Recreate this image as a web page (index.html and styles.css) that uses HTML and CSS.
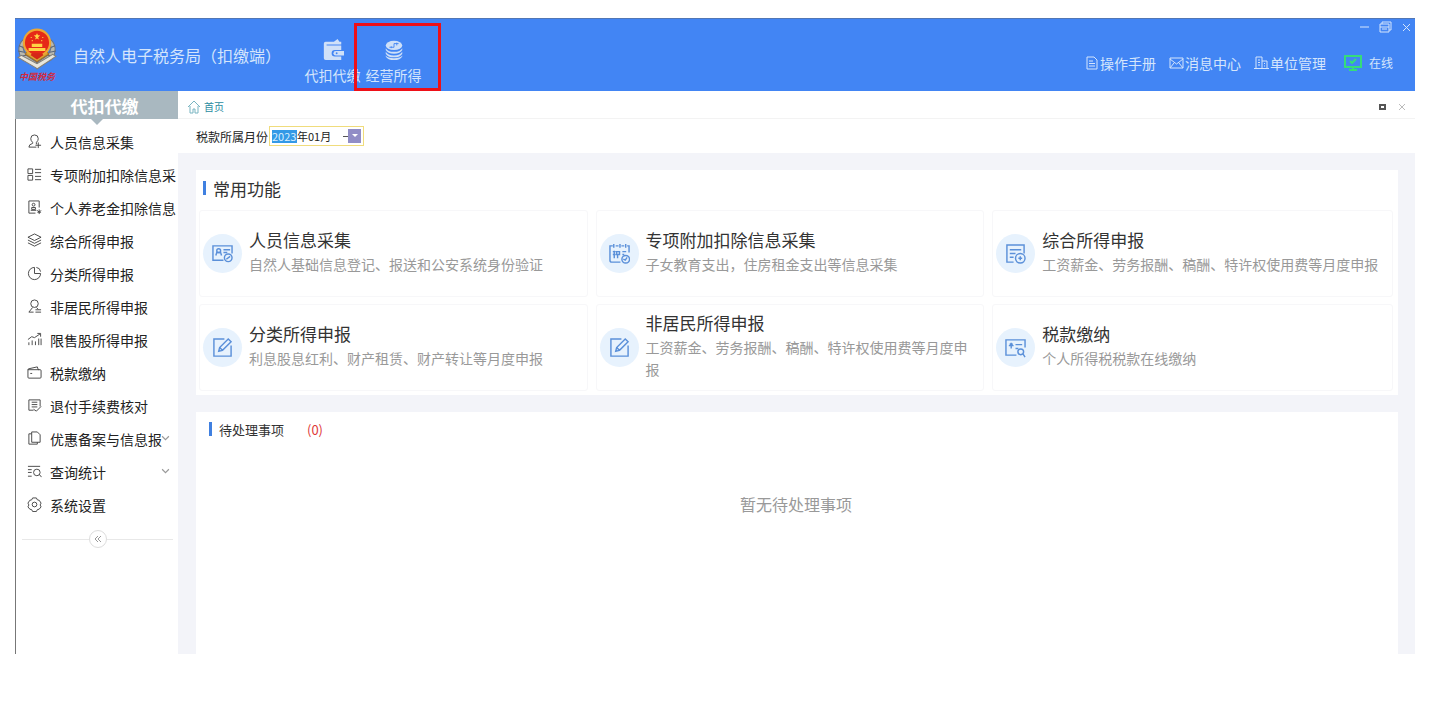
FILE: index.html
```html
<!DOCTYPE html>
<html lang="zh-CN">
<head>
    <meta charset="UTF-8">
    <meta name="viewport" content="width=device-width, initial-scale=1.0">
    <title>自然人电子税务局（扣缴端）</title>
    <link rel="stylesheet" href="styles.css">
</head>
<body>
    <div class="app">
        <header class="header">
            <div class="brand">
                <div class="emblem">
                    <svg width="40" height="42" viewBox="1 0 38 40">
                        <path d="M7 11C2 15 1 23 6 30L17 36L20 33L10 26C6 21 6 16 9 12Z" fill="#b9b9ae" stroke="#6c7480"/>
                        <path d="M33 11C38 15 39 23 34 30L23 36L20 33L30 26C34 21 34 16 31 12Z" fill="#b9b9ae" stroke="#6c7480"/>
                        <path d="M3 17l5 2M2 22l6 1M4 27l6-1M37 17l-5 2M38 22l-6 1M36 27l-6-1" stroke="#596579"/>
                        <path d="M2 28L19 38L20 39L38 27L35 25L20 34L5 26Z" fill="#e8e6dc" stroke="#827f78"/>
                        <path d="M9 25L20 32L31 25L29 21H11Z" fill="#d9a634" stroke="#a86c20"/>
                        <circle cx="20" cy="14" r="12.500" fill="#e62918" stroke="#eea634" stroke-width="2"/>
                        <path d="M20 5l1 2h2l-2 2 1 2-2-1-2 1 1-2-2-2h2zM12 19h16v3H12zM15 15h10v3H15z" fill="#ffd344"/>
                        <path d="M14 9h1M25 9h1M15 12h1M24 12h1" stroke="#ffd344"/>
                        <path d="M14 26l6 4 6-4-1-2H15z" fill="#d52817"/>
                    </svg>
                    <span class="emblem-text">中国税务</span>
                </div>
                <span class="brand-name">自然人电子税务局（扣缴端）</span>
            </div>
            <nav class="modules">
                <button class="module">
                    <svg width="24" height="24" viewBox="0 0 24 24">
                        <path d="M2 5q0-2 2-2h9l4-3 2 3h2v3H5v1h16v5h-7a3.500 3.500 0 0 0 0 7h7v4H4q-2 0-2-2z" fill="#cfe0f8"/>
                        <path d="M15 13h9v5h-9a2.500 2.500 0 0 1 0-5z" fill="#cfe0f8"/>
                        <circle cx="16" cy="15.500" r="1" fill="#4285f4"/>
                    </svg>
                    <span>代扣代缴</span>
                </button>
                <button class="module marked">
                    <svg width="24" height="24" viewBox="0 0 24 24" fill="#cfe0f8">
                        <ellipse cx="12" cy="7" rx="9" ry="5"/>
                        <path d="M3 10q2 4 9 4t9-4v2q-2 4-9 4t-9-4zM3 14q2 4 9 4t9-4v2q-2 4-9 4t-9-4zM3 18q2 3 9 3t9-3v1q-2 4-9 4t-9-4z"/>
                        <path d="M7 9h5V5h5M9 10V8M15 4v3" fill="none" stroke="#4285f4"/>
                    </svg>
                    <span>经营所得</span>
                </button>
            </nav>
            <div class="header-right">
                <div class="window-buttons">
                    <button aria-label="最小化"><svg width="12" height="14" viewBox="0 0 12 14"><path d="M1 7h9"/></svg></button>
                    <button aria-label="还原"><svg width="14" height="14" viewBox="0 0 14 14"><path d="M1 4h9v8H1zM3 4V2h9v8h-2M1 7h9M3 9h5"/></svg></button>
                    <button aria-label="关闭"><svg width="12" height="14" viewBox="0 0 12 14"><path d="M2 4l7 7M9 4l-7 7"/></svg></button>
                </div>
                <div class="tools">
                    <a href="#"><svg width="14" height="14" viewBox="0 0 14 14"><path d="M2 1h7l3 3v9H2zM4 5h4M4 7.500h6M4 10h6"/></svg>操作手册</a>
                    <a href="#"><svg width="15" height="14" viewBox="0 0 15 14"><path d="M1 2h13v10H1zM1 3l6.500 5L14 3M1 12l4-5M14 12l-4-5"/></svg>消息中心</a>
                    <a href="#"><svg width="15" height="14" viewBox="0 0 15 14"><path d="M2 12V1h6v11M8 5h5v7M0 12.500h15M4 4h2M4 6.500h2M4 9h2M10 7.500h1M10 10h1"/></svg>单位管理</a>
                    <span class="online">
                        <svg width="18" height="16" viewBox="0 0 18 16"><path d="M1 1h16v11H1zM9 12v3M5 15h8M6 6l2 2 4-4"/></svg>在线
                    </span>
                </div>
            </div>
        </header>

        <div class="body">
            <aside class="sidebar">
                <h2 class="sidebar-title">代扣代缴</h2>
                <ul class="menu">
                    <li><a href="#"><svg viewBox="0 0 16 16"><path d="M6 9Q4 7 4 5a4 4 0 0 1 8 0q0 2-2 4v2M6 9v1q-4 1-4 4h8M9 12h6M12 9v6"/></svg><span>人员信息采集</span></a></li>
                    <li><a href="#"><svg viewBox="0 0 16 16"><path d="M1 2h5v5H1zM1 9h5v5H1zM8.500 2.500H15M8.500 6H15M8.500 10H15M8.500 13.500H15"/></svg><span>专项附加扣除信息采</span></a></li>
                    <li><a href="#"><svg viewBox="0 0 16 16"><path d="M9 14H2V1h11v7M5 10V8h4v2zM4 11h6M11 11l2 2 2-2M11 13h4M13 10v5"/><circle cx="7" cy="5" r="1.500"/></svg><span>个人养老金扣除信息</span></a></li>
                    <li><a href="#"><svg viewBox="0 0 16 16"><path d="M8 1l7 3.500L8 8 1 4.500zM1 7.500L8 11l7-3.500M1 10.500L8 14l7-3.500"/></svg><span>综合所得申报</span></a></li>
                    <li><a href="#"><svg viewBox="0 0 16 16"><path d="M8 1.500A6.500 6.500 0 1 0 14.500 8H8zM10 1.500Q14 2 14.500 6"/></svg><span>分类所得申报</span></a></li>
                    <li><a href="#"><svg viewBox="0 0 16 16"><circle cx="8" cy="5" r="4"/><path d="M6 9L2 14h5M10 9l2 2M9 11.500h6M9 14h6"/></svg><span>非居民所得申报</span></a></li>
                    <li><a href="#"><svg viewBox="0 0 16 16"><path d="M1 8l4-3 3 1 6-4M11 1.500h3.500V5M2 14v-3M5.500 14V9M9 14v-4M12.500 14V7M15 14V7"/></svg><span>限售股所得申报</span></a></li>
                    <li><a href="#"><svg viewBox="0 0 16 16"><path d="M1 5q0-1 1-1l9-2 1 3h2q1 0 1 1v7q0 1-1 1H2q-1 0-1-1zM1 5h12M3.500 9h2"/></svg><span>税款缴纳</span></a></li>
                    <li><a href="#"><svg viewBox="0 0 16 16"><path d="M7 13H2V2h12v7M5 4.500h6M5 7h6M5 9.500h6M7 12l3 2 5-5"/></svg><span>退付手续费核对</span></a></li>
                    <li><a href="#"><svg viewBox="0 0 16 16"><path d="M5 1h6l3 3v8H5zM5 3H2v11h9v-2"/></svg><span>优惠备案与信息报</span><svg class="chevron" viewBox="0 0 8 8"><path d="M1 2l3 3 3-3"/></svg></a></li>
                    <li><a href="#"><svg viewBox="0 0 16 16"><path d="M1 2.500h13M1 6h4M1 9h4M1 13h4M13 11l2.500 3"/><circle cx="10.500" cy="9" r="3.500"/></svg><span>查询统计</span><svg class="chevron" viewBox="0 0 8 8"><path d="M1 2l3 3 3-3"/></svg></a></li>
                    <li><a href="#"><svg viewBox="0 0 16 16"><path d="M6 1h4l1 2 2 .5 2 3-1 2 1 2-2 2.500-2 .5-1 2H6l-1-2-2-.5-2-2.500 1-2-1-2 2-3L5 3z"/><circle cx="8" cy="8" r="2.500"/></svg><span>系统设置</span></a></li>
                </ul>
                <div class="collapse">
                    <button aria-label="收起菜单"><svg width="8" height="8" viewBox="0 0 8 8"><path d="M4 1L1 4l3 3M7 1L4 4l3 3"/></svg></button>
                </div>
            </aside>

            <main class="main">
                <div class="tabs">
                    <a class="home" href="#"><svg width="14" height="14" viewBox="0 0 14 14"><path d="M1 7l6-6 6 6M3 6v7h3V9h2v4h3V6"/></svg>首页</a>
                    <div class="tab-buttons">
                        <button aria-label="最大化"><span class="square"></span></button>
                        <button aria-label="关闭标签"><svg width="8" height="8" viewBox="0 0 8 8"><path d="M1 1l6 6M7 1L1 7"/></svg></button>
                    </div>
                </div>
                <div class="filter">
                    <label for="year">税款所属月份</label>
                    <div class="date-box">
                        <input class="year" id="year" type="text" value="2023">
                        <input class="month" type="text" value="年01月" aria-label="月份">
                        <span class="dash"></span>
                        <button aria-label="选择月份"><svg width="6" height="4" viewBox="0 0 6 4"><path d="M0 0h6L3 3z"/></svg></button>
                    </div>
                </div>

                <div class="content">
                    <section class="panel">
                        <h3 class="panel-title">常用功能</h3>
                        <div class="cards">
                            <a class="card" href="#">
                                <span class="card-icon"><svg viewBox="0 0 22 22"><path d="M12 18H1V3h20v8M4 13l1-3h4l1 3M12 7h7M12 10h4M15 17l4-3"/><circle cx="7" cy="8" r="2"/><circle cx="17" cy="15.500" r="4"/></svg></span>
                                <span class="card-text"><strong>人员信息采集</strong><span>自然人基础信息登记、报送和公安系统身份验证</span></span>
                            </a>
                            <a class="card" href="#">
                                <span class="card-icon"><svg viewBox="0 0 22 22"><path d="M12 20H3q-2 0-2-2V3h3M7 3h3M13 3h3M19 3h2v7M5 1v4M11.500 1v4M17.500 1v4M4 9h3M4 12h3M5.500 8v8M8 9h3v3H8zM9 12v4M14 9h4M14 12h2M15 17l2 1 2-3"/><circle cx="17.500" cy="17" r="4"/></svg></span>
                                <span class="card-text"><strong>专项附加扣除信息采集</strong><span>子女教育支出，住房租金支出等信息采集</span></span>
                            </a>
                            <a class="card" href="#">
                                <span class="card-icon"><svg viewBox="0 0 22 22"><path d="M9 20H2V2h18v9M5 7h12M5 11h6M5 15h4M14 16h4M16 14v4"/><circle cx="16" cy="16" r="5"/></svg></span>
                                <span class="card-text"><strong>综合所得申报</strong><span>工资薪金、劳务报酬、稿酬、特许权使用费等月度申报</span></span>
                            </a>
                            <a class="card" href="#">
                                <span class="card-icon"><svg viewBox="0 0 22 22"><path d="M13 2H2v18h18V9M7 15l1-4 9-9 3 3-9 9zM8 11l3 3"/></svg></span>
                                <span class="card-text"><strong>分类所得申报</strong><span>利息股息红利、财产租赁、财产转让等月度申报</span></span>
                            </a>
                            <a class="card" href="#">
                                <span class="card-icon"><svg viewBox="0 0 22 22"><path d="M13 2H2v18h18V9M7 15l1-4 9-9 3 3-9 9zM8 11l3 3"/></svg></span>
                                <span class="card-text"><strong>非居民所得申报</strong><span>工资薪金、劳务报酬、稿酬、特许权使用费等月度申报</span></span>
                            </a>
                            <a class="card" href="#">
                                <span class="card-icon"><svg viewBox="0 0 22 22"><path d="M12 19H1V3h20v8M4 9h5M6.500 6v6M5 7l1.500 2L8 7M11 8h7M11 12h3M19 18l2 3"/><circle cx="16.500" cy="15.500" r="3"/></svg></span>
                                <span class="card-text"><strong>税款缴纳</strong><span>个人所得税税款在线缴纳</span></span>
                            </a>
                        </div>
                    </section>

                    <section class="panel todo">
                        <h3 class="todo-title">待处理事项<span class="count">(0)</span></h3>
                        <p class="empty">暂无待处理事项</p>
                    </section>
                </div>
            </main>
        </div>
    </div>
</body>
</html>
```
FILE: styles.css
```css
*, *::before, *::after {
    box-sizing: border-box;
}
body {
    font-family: 'Noto Sans CJK SC', sans-serif;
    font-size: 14px;
    color: #333;
    background: white;
    display: flex;
    min-height: 100vh;
    margin: 0;
    padding: 18px 37px 68px 15px;
}
h2, h3, p, ul {
    margin: 0;
    padding: 0;
    font-weight: normal;
}
a {
    color: inherit;
    text-decoration: none;
}
button {
    display: flex;
    align-items: center;
    justify-content: center;
    background: none;
    border: none;
    padding: 0;
    color: inherit;
    font: inherit;
    cursor: pointer;
}
svg {
    flex-shrink: 0;
}
.app {
    flex: 1;
    min-width: 0;
    display: flex;
    flex-direction: column;
}

/* header */
.header {
    height: 73px;
    display: flex;
    background: #4285f4;
    border-top: 1px solid #5277b5;
    color: #d5e5fc;
}
.brand {
    display: flex;
    align-items: center;
    width: 287px;
    gap: 16px;
    padding-left: 2px;
    white-space: nowrap;
}
.emblem {
    display: flex;
    flex-direction: column;
    align-items: center;
    width: 40px;
}
.emblem-text {
    font-family: 'Noto Sans CJK SC', serif;
    font-size: 9px;
    font-style: italic;
    font-weight: bold;
    line-height: 13px;
    color: #d3293c;
}
.brand-name {
    font-size: 16px;
    line-height: 24px;
}
.modules {
    display: flex;
    align-items: stretch;
}
.module {
    position: relative;
    flex-direction: column;
    justify-content: flex-end;
    gap: 4px;
    width: 61px;
    padding-bottom: 6px;
    line-height: 20px;
}
.module svg {
    width: 22px;
    height: 22px;
}
.marked::after {
    content: "";
    position: absolute;
    top: 4px;
    bottom: 0;
    left: -9px;
    width: 87px;
    border: 3px solid #ee1018;
}
.header-right {
    flex: 1;
    display: flex;
    flex-direction: column;
    align-items: flex-end;
}
.header-right svg {
    fill: none;
    stroke: currentColor;
}
.window-buttons {
    display: flex;
    gap: 8px;
    height: 16px;
    padding-right: 2px;
}
.tools {
    display: flex;
    align-items: center;
    gap: 13px;
    height: 55px;
    padding-right: 22px;
}
.tools a, .online {
    display: flex;
    align-items: center;
}
.tools a {
    gap: 1px;
}
.online {
    gap: 7px;
    margin-left: 5px;
    font-size: 12px;
}
.header-right .online svg {
    stroke: #35dc7a;
    stroke-width: 2;
}

/* sidebar */
.body {
    flex: 1;
    display: flex;
}
.sidebar {
    width: 163px;
    flex-shrink: 0;
    border-left: 1px solid #777;
}
.sidebar-title {
    position: relative;
    height: 28px;
    margin-left: -1px;
    padding-left: 16px;
    background: #a9b8c0;
    color: white;
    font-size: 17px;
    font-weight: bold;
    line-height: 30px;
    text-align: center;
}
.sidebar-title::after {
    content: "";
    position: absolute;
    top: 28px;
    left: 76px;
    border: 6px solid transparent;
    border-top-color: #a9b8c0;
    border-bottom: none;
}
.menu {
    list-style: none;
    padding-top: 6px;
}
.menu a {
    position: relative;
    display: flex;
    align-items: center;
    gap: 8px;
    height: 33px;
    padding-left: 11px;
    color: #222;
    white-space: nowrap;
}
.menu svg {
    width: 15px;
    height: 15px;
    fill: none;
    stroke: #444;
}
.menu .chevron {
    position: absolute;
    right: 8px;
    width: 9px;
    height: 9px;
    stroke: #999;
}
.collapse {
    display: flex;
    align-items: center;
    margin: 9px 5px 0 6px;
}
.collapse::before, .collapse::after {
    content: "";
    flex: 1;
    border-top: 1px solid #e8e8e8;
}
.collapse button {
    width: 18px;
    height: 18px;
    border: 1px solid #ddd;
    border-radius: 50%;
}
.collapse svg {
    fill: none;
    stroke: #999;
}

/* main */
.main {
    flex: 1;
    min-width: 0;
    display: flex;
    flex-direction: column;
    background: #f3f4f9;
}
.tabs {
    display: flex;
    align-items: center;
    justify-content: space-between;
    height: 28px;
    padding: 4px 9px 0 9px;
    background: white;
    border-bottom: 1px solid #f3f3f3;
}
.home {
    display: flex;
    align-items: center;
    gap: 3px;
    color: #2b8ba0;
    font-size: 10px;
}
.home svg {
    fill: none;
    stroke: #79b4c1;
}
.tab-buttons {
    display: flex;
    gap: 12px;
}
.tab-buttons svg {
    stroke: #bbb;
}
.square {
    width: 7px;
    height: 6px;
    border: 2px solid #555;
}
.filter {
    display: flex;
    align-items: center;
    gap: 1px;
    height: 34px;
    padding-left: 18px;
    background: white;
    font-size: 12px;
    color: #222;
}
.date-box {
    display: flex;
    align-items: center;
    width: 95px;
    height: 20px;
    padding: 0 2px;
    border: 1px solid #f0dc7c;
}
.date-box input {
    border: none;
    padding: 0;
    height: 13px;
    font: 11px 'Noto Sans CJK SC', sans-serif;
    color: #222;
    background: none;
}
.date-box .year {
    width: 25px;
    background: #3399e6;
    color: #d9efff;
}
.date-box .month {
    flex: 1;
    min-width: 0;
}
.dash {
    width: 5px;
    border-top: 1px solid #555;
}
.date-box button {
    width: 13px;
    height: 14px;
    background: #918dc6;
}
.date-box button svg {
    fill: white;
}
.content {
    flex: 1;
    display: flex;
    flex-direction: column;
    gap: 17px;
    padding: 17px 17px 0 18px;
}
.panel {
    padding: 0 5px 4px 3px;
    background: white;
}
.panel-title {
    display: flex;
    align-items: center;
    gap: 7px;
    height: 40px;
    padding: 0 0 4px 4px;
    font-size: 17px;
}
.panel-title::before, .todo-title::before {
    content: "";
    width: 3px;
    height: 14px;
    background: #4080e0;
}
.cards {
    display: grid;
    grid-template-columns: 32fr 32fr 33fr;
    gap: 7px 8px;
}
.card {
    display: flex;
    align-items: center;
    gap: 7px;
    height: 87px;
    padding: 0 9px 0 3px;
    border: 1px solid #f7f7f9;
    border-radius: 3px;
}
.card-icon {
    display: flex;
    align-items: center;
    justify-content: center;
    flex-shrink: 0;
    width: 39px;
    height: 39px;
    border-radius: 50%;
    background: #e7f2fd;
}
.card-icon svg {
    width: 21px;
    height: 21px;
    fill: none;
    stroke: #5b90d9;
    stroke-width: 1.5;
}
.card-text {
    padding-bottom: 5px;
    line-height: 22px;
    color: #999;
}
.card-text strong {
    display: block;
    font-size: 17px;
    font-weight: normal;
    line-height: 26px;
    color: #333;
}
.card-text span {
    display: block;
}
.todo {
    flex: 1;
}
.todo-title {
    display: flex;
    align-items: center;
    gap: 7px;
    height: 34px;
    padding-left: 10px;
    font-size: 13px;
}
.count {
    margin-left: 16px;
    color: #e03a3a;
}
.empty {
    padding-top: 46px;
    font-size: 16px;
    line-height: 24px;
    text-align: center;
    color: #999;
}
```
